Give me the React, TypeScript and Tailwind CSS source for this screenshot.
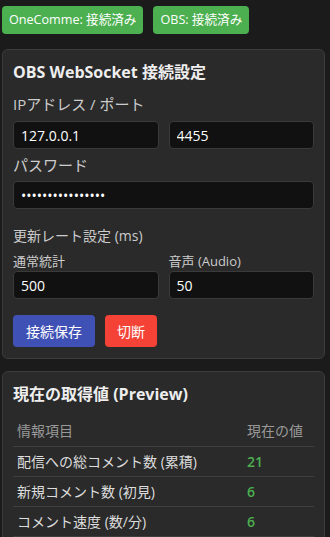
import React from "react";

const font = { fontFamily: '"Open Sans", "Noto Sans CJK JP", sans-serif' };

function Field({ value, type = "text" }: { value: string; type?: string }) {
  return (
    <input
      readOnly
      type={type}
      value={value}
      className="w-full h-[28px] rounded-[4px] border border-[#3a3a3a] bg-[#111111] px-[7px] text-[14px] text-white outline-none"
    />
  );
}

const rows = [
  { label: "配信への総コメント数 (累積)", value: "21" },
  { label: "新規コメント数 (初見)", value: "6" },
  { label: "コメント速度 (数/分)", value: "6" },
];

export default function App() {
  return (
    <div className="min-h-[537px] bg-[#1b1b1b] pl-[2px] pr-[5px] pt-[6px] text-[#dddddd]" style={font}>
      <div className="flex gap-[10px]">
        <span className="flex h-[28px] items-center rounded-[4px] bg-[#4caf50] px-[7px] text-[12.6px] text-white">
          OneComme: 接続済み
        </span>
        <span className="flex h-[28px] items-center rounded-[4px] bg-[#4caf50] px-[7px] text-[12.6px] text-white">
          OBS: 接続済み
        </span>
      </div>

      <div className="mt-[15px] rounded-[6px] border border-[#3c3c3c] bg-[#2a2a2a] px-[10px] pt-[10px] pb-[11px]">
        <h2 className="text-[16px] leading-[24px] font-bold text-[#eeeeee]">OBS WebSocket 接続設定</h2>
        <div className="mt-[9px] text-[15px] leading-[22px] text-[#cccccc]">IPアドレス / ポート</div>
        <div className="mt-[6px] grid grid-cols-2 gap-[10px]">
          <Field value="127.0.0.1" />
          <Field value="4455" />
        </div>
        <div className="mt-[5px] text-[15px] leading-[22px] text-[#cccccc]">パスワード</div>
        <div className="mt-[5px]">
          <Field type="password" value="****************" />
        </div>
        <div className="mt-[17px] text-[14px] leading-[20px] text-[#cccccc]">更新レート設定 (ms)</div>
        <div className="mt-[6px] grid grid-cols-2 gap-[10px]">
          <div>
            <div className="text-[13px] leading-[19px] text-[#cccccc]">通常統計</div>
            <Field value="500" />
          </div>
          <div>
            <div className="text-[13px] leading-[19px] text-[#cccccc]">音声 (Audio)</div>
            <Field value="50" />
          </div>
        </div>
        <div className="mt-[16px] flex gap-[10px]">
          <button className="h-[32px] w-[82px] rounded-[4px] bg-[#3f51b5] text-[14px] text-white">接続保存</button>
          <button className="h-[32px] w-[52px] rounded-[4px] bg-[#f44336] text-[14px] text-white">切断</button>
        </div>
      </div>

      <div className="mt-[12px] rounded-[6px] border border-[#3c3c3c] bg-[#2a2a2a] px-[10px] pt-[10px] pb-[10px]">
        <h2 className="text-[16px] leading-[24px] font-bold text-[#eeeeee]">現在の取得値 (Preview)</h2>
        <table className="mt-[10px] w-full border-collapse text-[14px]">
          <thead>
            <tr className="h-[30px] border-b border-[#3f3f3f]">
              <th className="px-[4px] text-left font-normal text-[#999999]">情報項目</th>
              <th className="w-[71px] px-[4px] text-left font-normal text-[#999999]">現在の値</th>
            </tr>
          </thead>
          <tbody>
            {rows.map((r) => (
              <tr key={r.label} className="h-[30px] border-b border-[#3f3f3f]">
                <td className="px-[4px] text-[#dddddd]">{r.label}</td>
                <td className="px-[4px] font-semibold text-[#4caf50]">{r.value}</td>
              </tr>
            ))}
          </tbody>
        </table>
      </div>
    </div>
  );
}
